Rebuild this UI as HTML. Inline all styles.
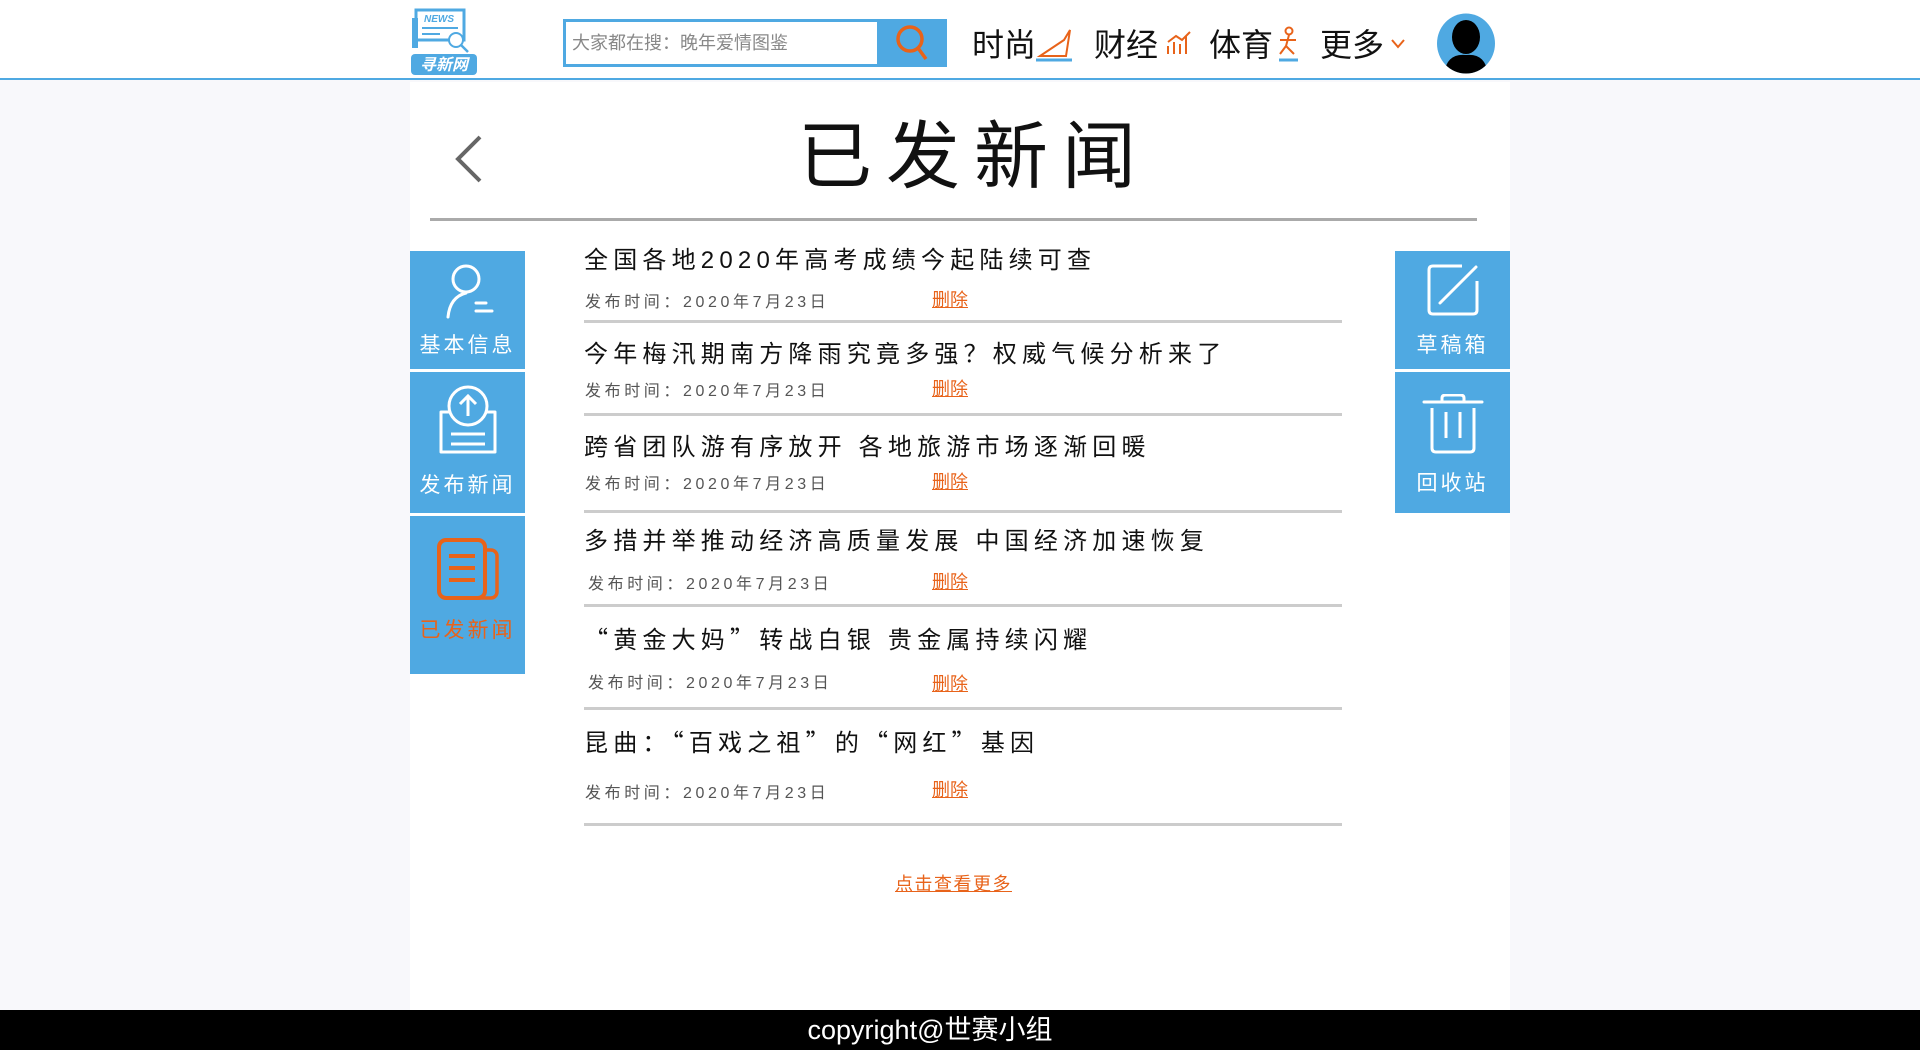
<!DOCTYPE html>
<html><head><meta charset="utf-8"><style>
*{margin:0;padding:0;box-sizing:border-box}
body{width:1920px;height:1050px;background:#f8f8fb;position:relative;overflow:hidden;font-family:"Liberation Sans","Noto Sans CJK SC",sans-serif;}
.a{position:absolute}
.q{font-family:"Noto Sans CJK SC",sans-serif}
.hdr{left:0;top:0;width:1920px;height:80px;background:#fff;border-bottom:2px solid #4fa9e2}
.main{left:410px;top:82px;width:1100px;height:928px;background:#fff}
.nav{font-size:32px;color:#111;top:20px}
.side{background:#4fa9e2;width:115px;color:#fff;text-align:center;font-size:21px;letter-spacing:3px}
.t{left:584px;font-size:24px;letter-spacing:5.2px;color:#111;white-space:nowrap}
.m{left:585px;font-size:16px;letter-spacing:3.6px;color:#555;white-space:nowrap}
.d{left:932px;font-size:18px;color:#e8631a;text-decoration:underline}
.ln{left:584px;width:758px;height:3px;background:#ccc}
</style></head><body>
<div class="a hdr"></div>
<svg class="a" style="left:410px;top:8px" width="68" height="68" viewBox="0 0 68 68">
<rect x="6" y="2" width="48" height="30" fill="none" stroke="#4fa9e2" stroke-width="3"/>
<text x="14" y="14" font-size="10" font-style="italic" font-weight="bold" fill="#4fa9e2" font-family="Liberation Sans">NEWS</text>
<line x1="12" y1="20" x2="48" y2="20" stroke="#4fa9e2" stroke-width="2"/>
<line x1="12" y1="26" x2="30" y2="26" stroke="#4fa9e2" stroke-width="2"/>
<rect x="2" y="10" width="6" height="30" fill="#4fa9e2"/>
<circle cx="46" cy="32" r="7" fill="#fff" stroke="#4fa9e2" stroke-width="2"/>
<line x1="51" y1="37" x2="58" y2="44" stroke="#4fa9e2" stroke-width="2.5"/>
<rect x="1" y="46" width="66" height="21" rx="4" fill="#4fa9e2"/>
<text x="34" y="62" font-size="16" font-weight="bold" font-style="italic" fill="#fff" text-anchor="middle" font-family="Noto Sans CJK SC">寻新网</text>
</svg>
<div class="a" style="left:563px;top:19px;width:384px;height:48px;background:#4fa9e2"></div>
<div class="a" style="left:566px;top:22px;width:311px;height:42px;background:#fff;font-size:18px;color:#888;line-height:42px;padding-left:6px">大家都在搜：晚年爱情图鉴</div>
<svg class="a" style="left:890px;top:22px" width="46" height="42" viewBox="0 0 46 42"><circle cx="20" cy="17" r="12" fill="none" stroke="#e8631a" stroke-width="3.5"/><line x1="28" y1="26" x2="36" y2="37" stroke="#e8631a" stroke-width="3.5"/></svg>
<div class="a nav" style="left:972px">时尚</div>
<svg class="a" style="left:1036px;top:26px" width="40" height="36"><path d="M4 30 L30 30 L34 4 L28 14 L10 26 Z" fill="none" stroke="#e8631a" stroke-width="2"/><line x1="0" y1="34" x2="36" y2="34" stroke="#4fa9e2" stroke-width="3"/></svg>
<div class="a nav" style="left:1094px">财经</div>
<svg class="a" style="left:1166px;top:30px" width="26" height="26"><path d="M2 24 V16 M8 24 V12 M14 24 V14 M20 24 V6 M2 12 L10 6 L16 10 L24 2" fill="none" stroke="#e8631a" stroke-width="2"/></svg>
<div class="a nav" style="left:1209px">体育</div>
<svg class="a" style="left:1276px;top:26px" width="26" height="36"><circle cx="13" cy="5" r="3.5" fill="none" stroke="#e8631a" stroke-width="2"/><path d="M13 9 L10 20 L4 28 M10 20 L18 28 M4 14 L20 14" fill="none" stroke="#e8631a" stroke-width="2"/><line x1="3" y1="34" x2="22" y2="34" stroke="#4fa9e2" stroke-width="3"/></svg>
<div class="a nav" style="left:1320px">更多</div>
<svg class="a" style="left:1390px;top:38px" width="16" height="12"><path d="M2 2 L8 9 L14 2" fill="none" stroke="#e8631a" stroke-width="2"/></svg>
<svg class="a" style="left:1436px;top:13px" width="60" height="61"><ellipse cx="30" cy="30.5" rx="29" ry="30" fill="#4fa9e2"/><clipPath id="c"><ellipse cx="30" cy="30.5" rx="29" ry="30"/></clipPath><g clip-path="url(#c)" fill="#000"><ellipse cx="30" cy="24" rx="14" ry="17"/><path d="M8 62 Q10 40 30 42 Q50 40 52 62 Z"/></g></svg>

<div class="a main"></div>
<svg class="a" style="left:450px;top:133px" width="40" height="52"><path d="M30 4 L8 26 L30 48" fill="none" stroke="#666" stroke-width="4"/></svg>
<div class="a" style="left:704px;top:112px;width:540px;text-align:center;font-size:74px;letter-spacing:14px;color:#111;line-height:90px">已发新闻</div>
<div class="a" style="left:430px;top:218px;width:1047px;height:3px;background:#aaa"></div>

<div class="a side" style="left:410px;top:251px;height:118px">
<svg style="margin-top:10px" width="60" height="60" viewBox="0 0 60 60"><circle cx="28" cy="18" r="13" fill="none" stroke="#fff" stroke-width="3"/><path d="M10 56 Q12 36 28 32" fill="none" stroke="#fff" stroke-width="3" stroke-linecap="round"/><path d="M38 42 H48 M38 50 H54" stroke="#fff" stroke-width="3" stroke-linecap="round"/></svg>
<div style="margin-top:2px">基本信息</div></div>
<div class="a side" style="left:410px;top:372px;height:141px">
<svg style="margin-top:12px" width="66" height="70" viewBox="0 0 66 70"><circle cx="33" cy="22" r="19" fill="#4fa9e2" stroke="#fff" stroke-width="3"/><path d="M33 32 V12 M25 20 L33 12 L41 20" fill="none" stroke="#fff" stroke-width="3"/><path d="M14 28 H6 V68 H60 V28 H52" fill="none" stroke="#fff" stroke-width="3" stroke-linejoin="round"/><path d="M16 50 H50 M16 60 H50" stroke="#fff" stroke-width="3"/></svg>
<div style="margin-top:9px">发布新闻</div></div>
<div class="a side" style="left:410px;top:516px;height:158px">
<svg style="margin-top:20px" width="66" height="66" viewBox="0 0 66 66"><rect x="16" y="14" width="46" height="48" rx="6" fill="none" stroke="#e8631a" stroke-width="3.5"/><rect x="4" y="4" width="46" height="58" rx="7" fill="#4fa9e2" stroke="#e8631a" stroke-width="4"/><path d="M14 20 H40 M14 32 H40 M14 44 H40" stroke="#e8631a" stroke-width="4"/></svg>
<div style="margin-top:6px;color:#e8631a">已发新闻</div></div>

<div class="a side" style="left:1395px;top:251px;height:118px">
<svg style="margin-top:12px" width="54" height="54" viewBox="0 0 54 54"><path d="M36 3 H7 Q3 3 3 7 V47 Q3 51 7 51 H47 Q51 51 51 47 V18" fill="none" stroke="#fff" stroke-width="3"/><line x1="14" y1="40" x2="50" y2="4" stroke="#fff" stroke-width="3" stroke-linecap="round"/></svg>
<div style="margin-top:6px">草稿箱</div></div>
<div class="a side" style="left:1395px;top:372px;height:141px">
<svg style="margin-top:22px" width="62" height="62" viewBox="0 0 62 62"><path d="M2 8 H60" stroke="#fff" stroke-width="3" stroke-linecap="round"/><path d="M20 8 V4 Q20 1 24 1 H38 Q42 1 42 4 V8" fill="none" stroke="#fff" stroke-width="3"/><path d="M10 14 V54 Q10 58 14 58 H48 Q52 58 52 54 V14" fill="none" stroke="#fff" stroke-width="3"/><path d="M24 18 V44 M38 18 V44" stroke="#fff" stroke-width="3"/></svg>
<div style="margin-top:5px">回收站</div></div>

<div class="a t" style="top:240px">全国各地2020年高考成绩今起陆续可查</div>
<div class="a m" style="top:288px">发布时间：2020年7月23日</div><div class="a d" style="top:286px">删除</div>
<div class="a ln" style="top:320px"></div>
<div class="a t" style="top:334px">今年梅汛期南方降雨究竟多强？权威气候分析来了</div>
<div class="a m" style="top:377px">发布时间：2020年7月23日</div><div class="a d" style="top:375px">删除</div>
<div class="a ln" style="top:413px"></div>
<div class="a t" style="top:427px">跨省团队游有序放开 各地旅游市场逐渐回暖</div>
<div class="a m" style="top:470px">发布时间：2020年7月23日</div><div class="a d" style="top:468px">删除</div>
<div class="a ln" style="top:510px"></div>
<div class="a t" style="top:521px">多措并举推动经济高质量发展 中国经济加速恢复</div>
<div class="a m" style="top:570px;left:588px">发布时间：2020年7月23日</div><div class="a d" style="top:568px">删除</div>
<div class="a ln" style="top:604px"></div>
<div class="a t" style="top:620px"><span class="q">“</span>黄金大妈<span class="q">”</span>转战白银 贵金属持续闪耀</div>
<div class="a m" style="top:669px;left:588px">发布时间：2020年7月23日</div><div class="a d" style="top:670px">删除</div>
<div class="a ln" style="top:707px"></div>
<div class="a t" style="top:723px">昆曲：<span class="q">“</span>百戏之祖<span class="q">”</span>的<span class="q">“</span>网红<span class="q">”</span>基因</div>
<div class="a m" style="top:779px">发布时间：2020年7月23日</div><div class="a d" style="top:776px">删除</div>
<div class="a ln" style="top:823px"></div>
<div class="a d" style="left:895px;top:870px;letter-spacing:1.5px">点击查看更多</div>

<div class="a" style="left:0;top:1010px;width:1920px;height:40px;background:#000"></div>
<div class="a" style="left:760px;top:1012px;width:340px;text-align:center;color:#fff;font-size:27px;line-height:36px">copyright@世赛小组</div>
</body></html>
